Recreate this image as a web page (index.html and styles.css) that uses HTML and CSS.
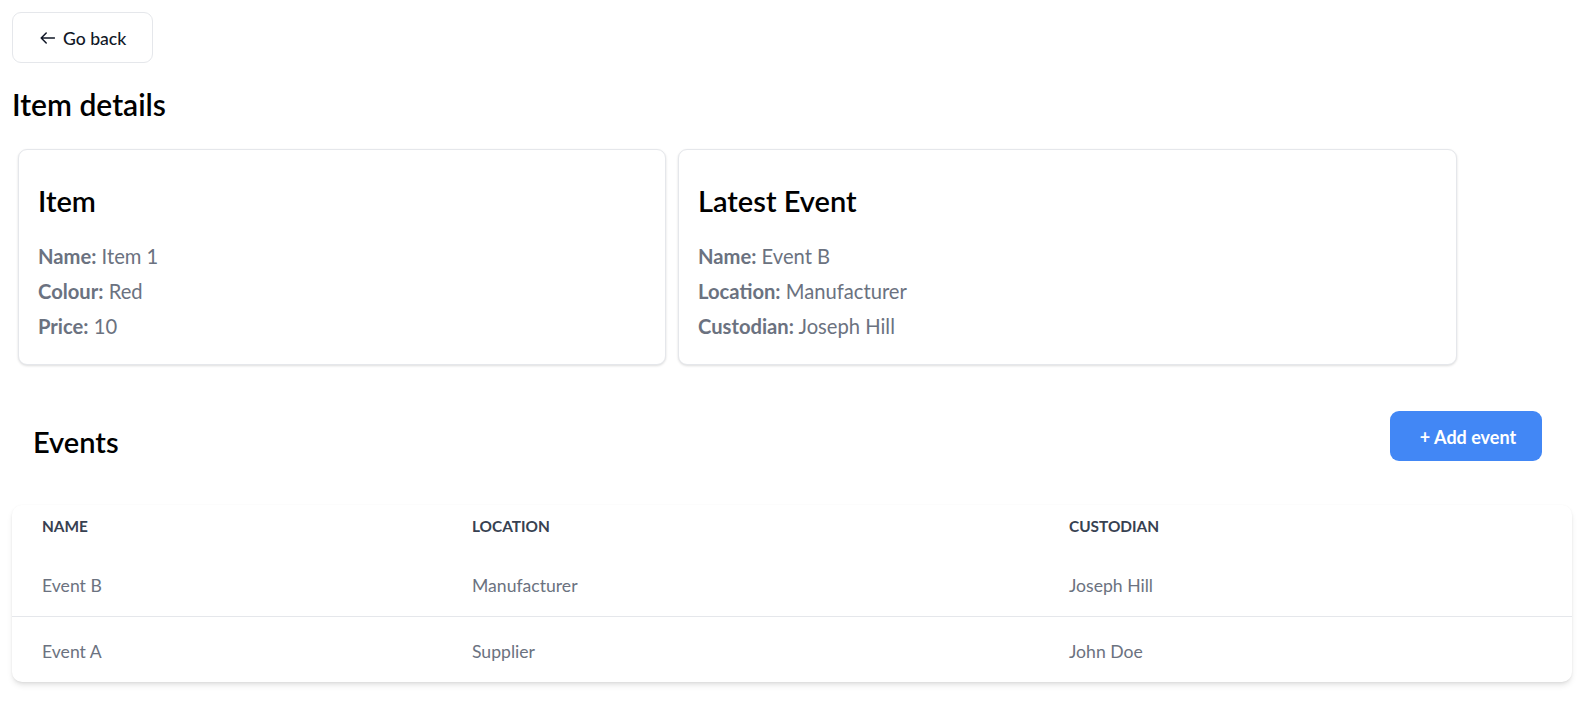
FILE: index.html
```html
<!DOCTYPE html>
<html lang="en">
<head>
<meta charset="utf-8">
<title>Item details</title>
<link rel="stylesheet" href="styles.css">
</head>
<body>
<main class="page">
  <button class="back-btn" type="button">
    <svg class="back-icon" width="15" height="12" viewBox="0 0 15 12" aria-hidden="true"><path d="M14.5 6H1.2M6.2 1L1.2 6l5 5" fill="none" stroke="#111827" stroke-width="1.5" stroke-linecap="round" stroke-linejoin="round"/></svg>
    <span>Go back</span>
  </button>

  <h1 class="page-title">Item details</h1>

  <section class="cards">
    <div class="card">
      <h2 class="card-title">Item</h2>
      <p class="row"><b>Name:</b> Item 1</p>
      <p class="row"><b>Colour:</b> Red</p>
      <p class="row"><b>Price:</b> 10</p>
    </div>
    <div class="card">
      <h2 class="card-title">Latest Event</h2>
      <p class="row"><b>Name:</b> Event B</p>
      <p class="row"><b>Location:</b> Manufacturer</p>
      <p class="row"><b>Custodian:</b> Joseph Hill</p>
    </div>
  </section>

  <div class="events-head">
    <h2 class="events-title">Events</h2>
    <button class="add-btn" type="button">+ Add event</button>
  </div>

  <div class="table-card">
    <table class="events-table">
      <thead>
        <tr>
          <th class="col-name">Name</th>
          <th class="col-loc">Location</th>
          <th>Custodian</th>
        </tr>
      </thead>
      <tbody>
        <tr class="divided">
          <td>Event B</td>
          <td>Manufacturer</td>
          <td>Joseph Hill</td>
        </tr>
        <tr>
          <td>Event A</td>
          <td>Supplier</td>
          <td>John Doe</td>
        </tr>
      </tbody>
    </table>
  </div>
</main>
</body>
</html>
```

FILE: styles.css
```css
* { box-sizing: border-box; }

html, body {
  margin: 0;
  padding: 0;
  background: #ffffff;
}

body {
  font-family: Lato, "Noto Sans", "Liberation Sans", sans-serif;
  color: #111827;
}

.page {
  padding: 12px 17px 20px 12px;
}

.back-btn {
  display: flex;
  align-items: center;
  gap: 8px;
  width: 141px;
  height: 51px;
  padding: 2px 0 0 27px;
  border: 1px solid #e5e7eb;
  border-radius: 9px;
  background: #ffffff;
  font-family: inherit;
  font-size: 17.6px;
  line-height: 25px;
  font-weight: 500;
  color: #111827;
}

.back-icon {
  flex: none;
  margin-top: -1px;
}

.page-title {
  margin: 23px 0 0 0;
  font-size: 30px;
  line-height: 36px;
  font-weight: 600;
  color: #000000;
}

.cards {
  display: grid;
  grid-template-columns: 648px 779px;
  gap: 12px;
  margin: 27px 0 0 6px;
}

.card {
  border: 1px solid #e5e7eb;
  border-radius: 9px;
  box-shadow: 0 1px 3px rgba(0, 0, 0, 0.09), 0 1px 2px rgba(0, 0, 0, 0.05);
  padding: 33px 19px 20px 19px;
  background: #ffffff;
}

.card-title {
  margin: 0 0 20px 0;
  font-size: 29px;
  line-height: 36px;
  font-weight: 600;
  color: #000000;
}

.row {
  margin: 0;
  font-size: 20.2px;
  line-height: 35px;
  color: #6b7280;
}

.row b {
  font-weight: 700;
}

.events-head {
  display: flex;
  justify-content: space-between;
  align-items: flex-start;
  margin-top: 46px;
  padding: 0 30px 0 21px;
}

.events-title {
  margin: 13px 0 0 0;
  font-size: 29px;
  line-height: 36px;
  font-weight: 600;
  color: #000000;
}

.add-btn {
  width: 152px;
  height: 50px;
  padding: 2px 0 0 4px;
  border: none;
  border-radius: 9px;
  background: #4287f5;
  color: #ffffff;
  font-family: inherit;
  font-size: 18px;
  line-height: 48px;
  font-weight: 700;
  text-align: center;
}

.table-card {
  margin-top: 44px;
  border-radius: 10px;
  background: #ffffff;
  box-shadow: 0 4px 6px -1px rgba(0, 0, 0, 0.1), 0 2px 4px -2px rgba(0, 0, 0, 0.1), 0 0 2px rgba(0, 0, 0, 0.04);
  overflow: hidden;
}

.events-table {
  width: 100%;
  border-collapse: collapse;
  table-layout: fixed;
}

.col-name { width: 430px; }
.col-loc { width: 597px; }

.events-table th {
  text-align: left;
  padding: 10px 0 14px 30px;
  font-size: 15.4px;
  line-height: 22px;
  font-weight: 700;
  text-transform: uppercase;
  color: #374151;
}

.events-table td {
  padding: 22px 0 18px 30px;
  font-size: 17.6px;
  line-height: 25px;
  color: #6b7280;
}

.events-table tr.divided td {
  border-bottom: 1px solid #e5e7eb;
}
```
